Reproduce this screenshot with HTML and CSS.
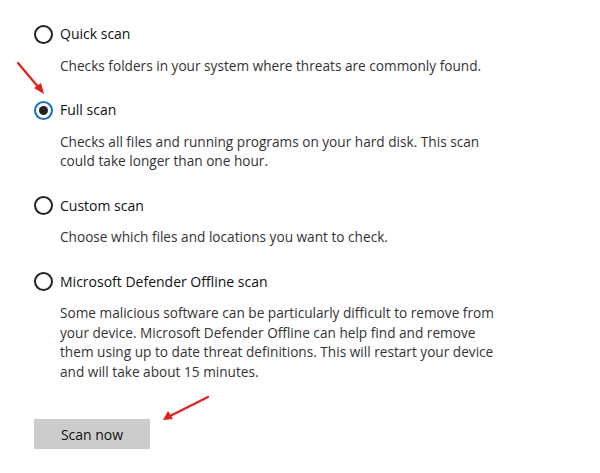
FILE: index.html
```html
<!DOCTYPE html>
<html>
<head>
<meta charset="utf-8">
<link rel="stylesheet" href="styles.css">
</head>
<body>
<div class="page">
  <div class="option">
    <div class="row"><span class="radio"></span><span class="label">Quick scan</span></div>
    <p class="desc">Checks folders in your system where threats are commonly found.</p>
  </div>
  <div class="option">
    <div class="row"><span class="radio checked"></span><span class="label">Full scan</span></div>
    <p class="desc">Checks all files and running programs on your hard disk. This scan<br>could take longer than one hour.</p>
  </div>
  <div class="option">
    <div class="row"><span class="radio"></span><span class="label">Custom scan</span></div>
    <p class="desc">Choose which files and locations you want to check.</p>
  </div>
  <div class="option">
    <div class="row"><span class="radio"></span><span class="label">Microsoft Defender Offline scan</span></div>
    <p class="desc">Some malicious software can be particularly difficult to remove from<br>your device. Microsoft Defender Offline can help find and remove<br>them using up to date threat definitions. This will restart your device<br>and will take about 15 minutes.</p>
  </div>
  <button class="scan-btn">Scan now</button>
  <svg class="annot" width="600" height="473" viewBox="0 0 600 473">
    <g stroke="#e0201b" stroke-width="2.2" fill="none" stroke-linecap="round">
      <line x1="18" y1="63" x2="39" y2="88"/>
      <line x1="208" y1="397" x2="170" y2="416"/>
    </g>
    <g fill="#e0201b">
      <polygon points="44,94 34,88 41,83"/>
      <polygon points="163,420 168,411 173,419"/>
    </g>
  </svg>
</div>
</body>
</html>
```
FILE: styles.css
```css
html, body {
  margin: 0;
  padding: 0;
  background: #ffffff;
}
.page {
  position: relative;
  width: 600px;
  height: 473px;
  box-sizing: border-box;
  padding: 24px 0 0 34px;
  font-family: "Open Sans", "Noto Sans", sans-serif;
  overflow: hidden;
}
.option {
  margin-bottom: 25px;
}
.row {
  display: flex;
  align-items: center;
  height: 20px;
  gap: 7px;
}
.radio {
  width: 19px;
  height: 19px;
  box-sizing: border-box;
  border: 2px solid #222;
  border-radius: 50%;
  flex: none;
  display: flex;
  align-items: center;
  justify-content: center;
}
.radio.checked {
  border-color: #1a6fbf;
}
.radio.checked::after {
  content: "";
  width: 9px;
  height: 9px;
  border-radius: 50%;
  background: #222;
}
.label {
  font-size: 14px;
  color: #111;
  line-height: 20px;
}
.desc {
  margin: 11.5px 0 0 26px;
  font-size: 13.65px;
  line-height: 19.5px;
  color: #333;
}
.scan-btn {
  display: block;
  margin-top: 38px;
  width: 116px;
  height: 30px;
  border: none;
  background: #cccccc;
  font-family: "Open Sans", "Noto Sans", sans-serif;
  font-size: 14px;
  color: #111;
  padding: 0;
}
.annot {
  position: absolute;
  left: 0;
  top: 0;
  pointer-events: none;
}
```
